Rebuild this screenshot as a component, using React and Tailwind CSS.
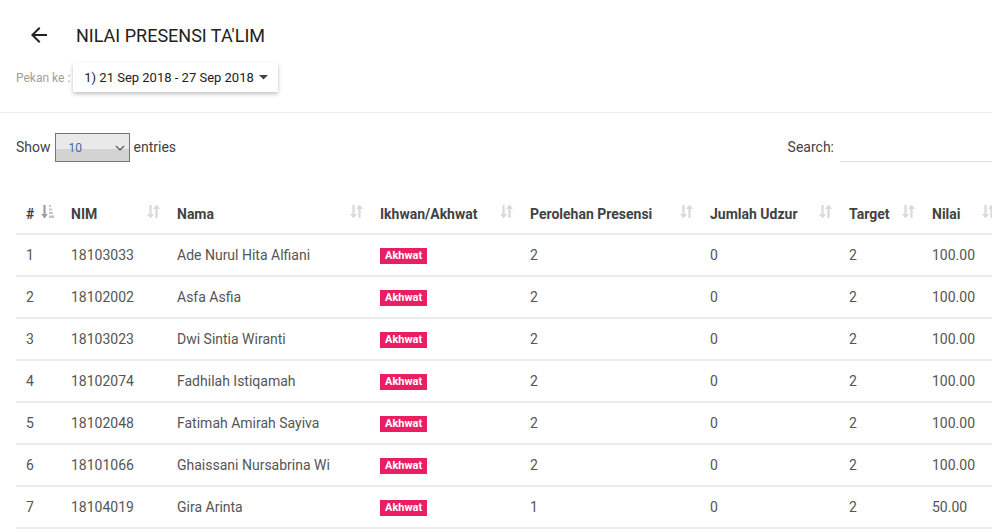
import React from 'react';

const rows = [
    { no: 1, nim: '18103033', nama: 'Ade Nurul Hita Alfiani', presensi: 2, udzur: 0, target: 2, nilai: '100.00' },
    { no: 2, nim: '18102002', nama: 'Asfa Asfia', presensi: 2, udzur: 0, target: 2, nilai: '100.00' },
    { no: 3, nim: '18103023', nama: 'Dwi Sintia Wiranti', presensi: 2, udzur: 0, target: 2, nilai: '100.00' },
    { no: 4, nim: '18102074', nama: 'Fadhilah Istiqamah', presensi: 2, udzur: 0, target: 2, nilai: '100.00' },
    { no: 5, nim: '18102048', nama: 'Fatimah Amirah Sayiva', presensi: 2, udzur: 0, target: 2, nilai: '100.00' },
    { no: 6, nim: '18101066', nama: 'Ghaissani Nursabrina Wi', presensi: 2, udzur: 0, target: 2, nilai: '100.00' },
    { no: 7, nim: '18104019', nama: 'Gira Arinta', presensi: 1, udzur: 0, target: 2, nilai: '50.00' },
];

const columns = [
    { label: '#', width: 'w-[45px]', active: true },
    { label: 'NIM', width: 'w-[106px]' },
    { label: 'Nama', width: 'w-[203px]' },
    { label: 'Ikhwan/Akhwat', width: 'w-[150px]' },
    { label: 'Perolehan Presensi', width: 'w-[180px]' },
    { label: 'Jumlah Udzur', width: 'w-[139px]' },
    { label: 'Target', width: 'w-[83px]' },
    { label: 'Nilai', width: 'w-[80px]' },
];

const SortIcon = ({ active }) => {
    if (active) {
        return (
            <svg width="13" height="15" viewBox="0 0 13 15" className="shrink-0">
                <path d="M3.5 1v10" stroke="#a0a0a0" strokeWidth="2.2" />
                <path d="M0 10l3.5 4.5 3.5-4.5z" fill="#a0a0a0" />
                <rect x="8" y="1" width="2" height="2" fill="#c4c4c4" />
                <rect x="8" y="4.5" width="3" height="2" fill="#c4c4c4" />
                <rect x="8" y="8" width="4" height="2" fill="#c4c4c4" />
                <rect x="8" y="11.5" width="5" height="2.5" fill="#c4c4c4" />
            </svg>
        );
    }
    return (
        <svg width="13" height="15" viewBox="0 0 13 15" className="shrink-0">
            <path d="M3.5 1v10" stroke="#d9d9d9" strokeWidth="2.2" />
            <path d="M0 10l3.5 4.5 3.5-4.5z" fill="#d9d9d9" />
            <path d="M9.5 4v10" stroke="#d9d9d9" strokeWidth="2.2" />
            <path d="M6 5l3.5-4.5 3.5 4.5z" fill="#d9d9d9" />
        </svg>
    );
};

const App = () => {
    return (
        <div className="w-[992px] h-[532px] overflow-hidden bg-white font-['Roboto',sans-serif] text-[#424242]">
            <div className="px-4 pt-5 pb-5 border-b border-[#eeeeee]">
                <div className="flex items-center h-[30px]">
                    <svg width="24" height="24" viewBox="0 0 24 24" className="ml-[11px]">
                        <path d="M20 11H7.83l5.59-5.59L12 4l-8 8 8 8 1.41-1.41L7.83 13H20v-2z" fill="#212121" />
                    </svg>
                    <h1 className="ml-[25px] text-[18px] text-[#212121]">NILAI PRESENSI TA'LIM</h1>
                </div>
                <div className="flex items-center mt-[13px]">
                    <span className="text-[12px] text-[#9e9e9e]">Pekan ke :</span>
                    <button className="ml-[3px] h-[29px] flex items-center whitespace-nowrap pl-[11px] pr-[10px] bg-white shadow-[0_2px_4px_rgba(0,0,0,0.25)] text-[13px] text-[#212121]">
                        <span>1) 21 Sep 2018 - 27 Sep 2018</span>
                        <svg width="9" height="5" viewBox="0 0 9 5" className="ml-[5px]">
                            <path d="M0 0h9L4.5 4.5z" fill="#424242" />
                        </svg>
                    </button>
                </div>
            </div>

            <div className="pl-4 pt-5">
                <div className="flex items-center justify-between h-[29px]">
                    <div className="flex items-center text-[14px] text-[#424242]">
                        <span>Show</span>
                        <div className="ml-1 w-[75px] h-[29px] border border-[#767676] bg-[linear-gradient(#e9e9e9_0,#e9e9e9_55%,#d3d3d3_55%,#d3d3d3_100%)] flex items-center pl-[13px] pr-[4px] justify-between">
                            <span className="text-[12px] text-[#3f6a9e]">10</span>
                            <svg width="10" height="6" viewBox="0 0 10 6">
                                <path d="M1 1l4 4 4-4" stroke="#555" strokeWidth="1.2" fill="none" />
                            </svg>
                        </div>
                        <span className="ml-1">entries</span>
                    </div>
                    <div className="flex items-center text-[14px] text-[#424242]">
                        <span>Search:</span>
                        <div className="ml-[6px] w-[152px] h-[29px] border-b border-[#dddddd]" />
                    </div>
                </div>

                <table className="mt-[30px] table-fixed border-collapse w-[986px] text-[14px]">
                    <thead>
                        <tr className="h-[42px] border-b-2 border-[#ececec]">
                            {columns.map((col) => (
                                <th key={col.label} className={`${col.width} pl-[10px] pr-[7px] text-left font-bold text-[#424242]`}>
                                    <div className="flex items-center justify-between pt-[4px]">
                                        <span>{col.label}</span>
                                        <span className="-mt-[6px]">
                                            <SortIcon active={col.active} />
                                        </span>
                                    </div>
                                </th>
                            ))}
                        </tr>
                    </thead>
                    <tbody className="text-[#555555]">
                        {rows.map((row) => (
                            <tr key={row.no} className="h-[42px] border-b-2 border-[#ececec]">
                                <td className="px-[10px]">{row.no}</td>
                                <td className="px-[10px]">{row.nim}</td>
                                <td className="px-[10px] whitespace-nowrap overflow-hidden">{row.nama}</td>
                                <td className="px-[10px]">
                                    <span className="inline-block bg-[#e91e63] text-white text-[11px] font-bold leading-[16px] px-[5px] align-middle">Akhwat</span>
                                </td>
                                <td className="px-[10px]">{row.presensi}</td>
                                <td className="px-[10px]">{row.udzur}</td>
                                <td className="px-[10px]">{row.target}</td>
                                <td className="px-[10px]">{row.nilai}</td>
                            </tr>
                        ))}
                    </tbody>
                </table>
            </div>
        </div>
    );
};

export default App;
